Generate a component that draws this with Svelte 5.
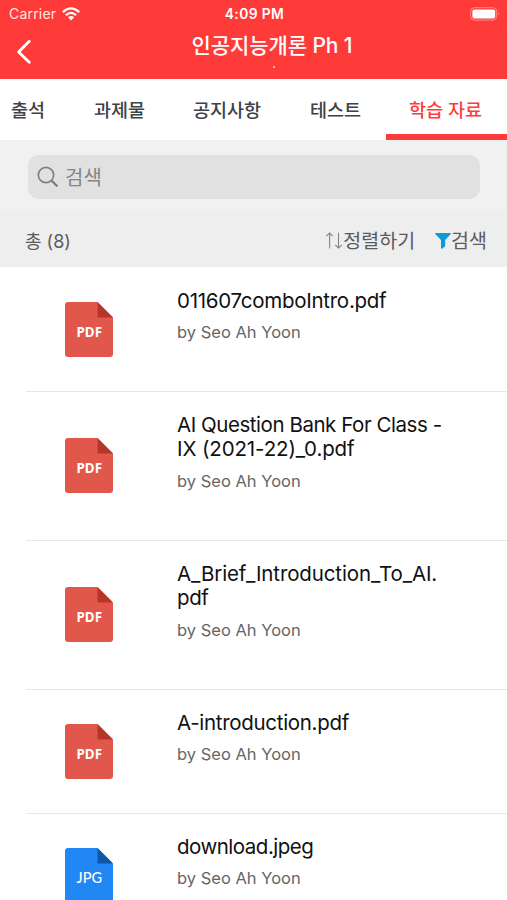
<script>
  const tabs = [
    { label: '출석' },
    { label: '과제물' },
    { label: '공지사항' },
    { label: '테스트' },
    { label: '학습 자료', active: true }
  ];
  // Each title line carries its own tracking in px.
  const files = [
    { lines: [['011607comboIntro.pdf', -0.27]], type: 'PDF' },
    { lines: [['AI Question Bank For Class -', -0.45], ['IX (2021-22)_0.pdf', -0.12]], type: 'PDF' },
    { lines: [['A_Brief_Introduction_To_AI.', -0.12], ['pdf', -0.4]], type: 'PDF' },
    { lines: [['A-introduction.pdf', -0.3]], type: 'PDF' },
    { lines: [['download.jpeg', -0.5]], type: 'JPG' }
  ];
</script>

<main>
  <header>
    <div class="status">
      <div class="carrier">
        <span>Carrier</span>
        <svg width="18" height="14" viewBox="0 0 18 14" fill="none" stroke="#fff" stroke-width="2.3">
          <path d="M.8 5.2Q9-2.5 17.2 5.2M3.9 8.2Q9 3.6 14.1 8.2" />
          <path d="M6 10.2Q9 7.7 12 10.2L9 13.4Z" fill="#fff" stroke="none" />
        </svg>
      </div>
      <span class="clock">4:09 PM</span>
      <svg class="battery" width="30" height="14" viewBox="0 0 30 14">
        <rect x=".7" y=".7" width="26" height="12.4" rx="3.6" fill="none" stroke="#ff8c88" />
        <rect x="2.4" y="2.4" width="22.8" height="9" rx="2" fill="#fff" />
        <path d="M28.3 5Q30 6.8 28.3 8.7Z" fill="#ff8c88" />
      </svg>
    </div>
    <div class="nav">
      <svg class="back" width="16" height="26" viewBox="0 0 16 26" fill="none" stroke="#fff" stroke-width="2.8" stroke-linecap="round" stroke-linejoin="round">
        <path d="M13.3 2.2L2.6 13L13.3 23.2" />
      </svg>
      <div class="heading">
        <h1>인공지능개론 Ph 1</h1>
        <span class="dot"></span>
      </div>
    </div>
  </header>

  <nav class="tabs">
    {#each tabs as tab}
      <span class="tab" class:active={tab.active}>{tab.label}</span>
    {/each}
  </nav>

  <section class="search">
    <div class="field">
      <svg width="22" height="22" viewBox="0 0 22 22" fill="none" stroke="#818181" stroke-width="1.7">
        <circle cx="9" cy="9" r="7.7" />
        <path d="M14.4 14.4L20.4 20.4" stroke-width="2.2" />
      </svg>
      <span>검색</span>
    </div>
  </section>

  <section class="tools">
    <span class="total">총 (8)</span>
    <div class="sort">
      <svg width="18" height="18" viewBox="0 0 18 18" fill="none" stroke="#858585" stroke-width="1.1">
        <path d="M4.6 16.5V1.2M1.3 4.2L4.6 1L7.9 4.2M13.5 .8V15.8M10.2 12.8L13.5 16L16.8 12.8" />
      </svg>
      <span>정렬하기</span>
    </div>
    <div class="filter">
      <svg width="16" height="16" viewBox="0 0 16 16" fill="#0c9add">
        <path d="M.7 0H15.3Q16.2.3 15.6 1.2L10.2 7V13.2L7 15.8Q6 16 6 15V7L.4 1.2Q-.1.3.7 0Z" />
      </svg>
      <span>검색</span>
    </div>
  </section>

  <ul>
    {#each files as file}
      <li>
        <svg class="icon" class:blue={file.type === 'JPG'} width="48" height="55" viewBox="0 0 48 55">
          <path class="sheet" d="M3 0H32.5L48 15.5V52Q48 55 45 55H3Q0 55 0 52V3Q0 0 3 0Z" />
          <path class="fold" d="M32.5 0L48 15.5H32.5Z" />
          <text x="11.5" y="34.5" textLength="25.5" lengthAdjust="spacingAndGlyphs">{file.type}</text>
        </svg>
        <div class="info">
          <h2>
            {#each file.lines as [text, tracking]}
              <span style:letter-spacing="{tracking}px">{text}</span>
            {/each}
          </h2>
          <p>by Seo Ah Yoon</p>
        </div>
      </li>
    {/each}
  </ul>
</main>

<style>
  :global(body) { margin: 0; overflow: hidden; }
  main {
    width: 507px;
    height: 900px;
    overflow: hidden;
    background: #fff;
    color: #111;
    font-family: Inter, 'Noto Sans CJK KR', sans-serif;
    white-space: nowrap;
  }
  svg { display: block; flex: none; }
  h1, h2, p, ul { margin: 0; padding: 0; }
  header { height: 79px; background: #ff3b39; color: #fff; }
  .status {
    display: grid;
    grid-template-columns: 1fr auto 1fr;
    align-items: center;
    height: 27px;
    padding: 0 7px 0 9px;
    box-sizing: border-box;
  }
  .carrier { display: flex; align-items: center; gap: 6px; font-size: 14px; letter-spacing: .2px; color: #ffe5e4; }
  .clock { font-size: 13.8px; font-weight: 600; letter-spacing: .4px; }
  .battery { justify-self: end; }
  .nav { display: grid; grid-template-columns: 37px 1fr 0; height: 52px; }
  .back { margin: 12px 0 0 16px; }
  .heading { display: flex; flex-direction: column; align-items: center; }
  h1 { height: 38px; line-height: 37px; font-size: 21px; font-weight: 500; letter-spacing: -.1px; }
  .dot { width: 2px; height: 2px; border-radius: 50%; background: #ffd8d7; margin: 1px 0 0 3px; }
  .tabs {
    display: grid;
    grid-template-columns: 83px 99px 117px 87px 121px;
    height: 61px;
    box-sizing: border-box;
    color: #3c4248;
    font-size: 18.5px;
    font-weight: 500;
    line-height: 62px;
  }
  .tab { padding-left: 11px; }
  .tab.active { padding-left: 23px; color: #ff3b39; border-bottom: 6px solid #ff3b39; height: 55px; }
  .search { height: 71px; padding: 15px 27px 0 28px; box-sizing: border-box; background: #f1f1f1; }
  .field {
    display: flex;
    align-items: center;
    gap: 6px;
    height: 44px;
    padding-left: 9px;
    border-radius: 11px;
    background: #e1e1e1;
    color: #858585;
    font-size: 20px;
  }
  .field span { margin-bottom: 2px; }
  .tools {
    display: flex;
    align-items: center;
    height: 56px;
    padding: 3px 20px 0 25px;
    box-sizing: border-box;
    background: #eee;
    color: #5b5b5b;
    font-size: 19.5px;
  }
  .tools span { margin-bottom: 2px; }
  .total { margin-right: auto; font-size: 18px; }
  .sort, .filter { display: flex; align-items: center; }
  .filter { margin-left: 20px; }
  ul { list-style: none; padding-top: .5px; }
  li {
    display: flex;
    align-items: center;
    margin-left: 26px;
    padding-left: 39px;
    border-bottom: 1px solid #e6e6e6;
  }
  .icon { margin-right: 64px; }
  .icon text { font: 700 15px 'Noto Sans', sans-serif; fill: #fff; }
  .sheet { fill: #e2574c; }
  .fold { fill: #b53629; }
  .blue .sheet { fill: #2087f5; }
  .blue .fold { fill: #0d57a5; }
  .blue text { font: 500 15px Lato, sans-serif; }
  .info { padding: 21px 0 46.3px; }
  h2 { font-size: 20.5px; line-height: 24.6px; font-weight: 400; }
  h2 span { display: block; }
  p { margin-top: 8px; line-height: 23.4px; font-size: 16.5px; color: #666; }
</style>
